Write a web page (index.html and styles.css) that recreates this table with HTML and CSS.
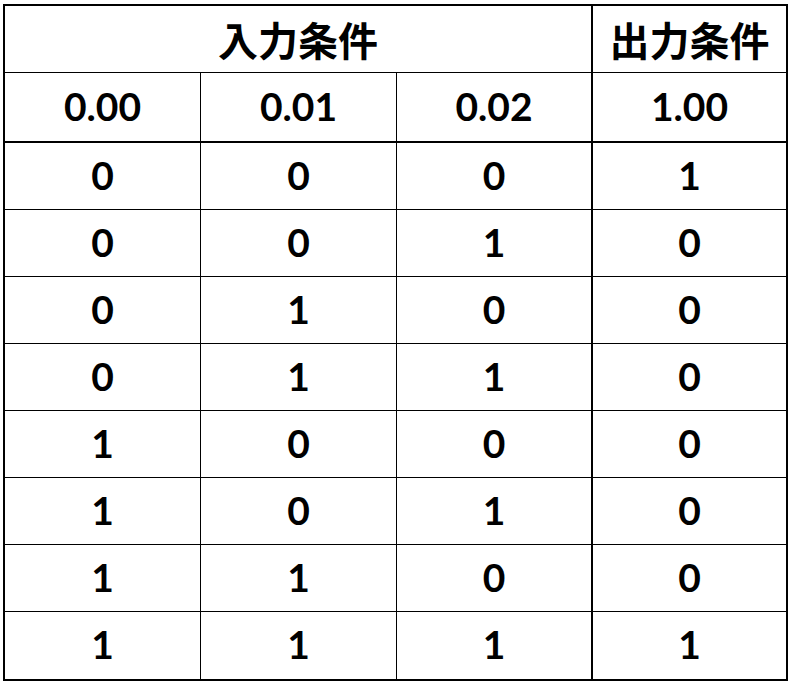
FILE: index.html
```html
<!DOCTYPE html>
<html lang="ja">
<head>
<meta charset="utf-8">
<title>真理値表</title>
<link rel="stylesheet" href="styles.css">
</head>
<body>
<div class="table">
  <div class="cell head span3 thick-r">入力条件</div>
  <div class="cell head last-c">出力条件</div>

  <div class="cell num thick-b">0.00</div>
  <div class="cell num thick-b">0.01</div>
  <div class="cell num thick-b thick-r">0.02</div>
  <div class="cell num thick-b last-c">1.00</div>

  <div class="cell num">0</div><div class="cell num">0</div><div class="cell num thick-r">0</div><div class="cell num last-c">1</div>
  <div class="cell num">0</div><div class="cell num">0</div><div class="cell num thick-r">1</div><div class="cell num last-c">0</div>
  <div class="cell num">0</div><div class="cell num">1</div><div class="cell num thick-r">0</div><div class="cell num last-c">0</div>
  <div class="cell num">0</div><div class="cell num">1</div><div class="cell num thick-r">1</div><div class="cell num last-c">0</div>
  <div class="cell num">1</div><div class="cell num">0</div><div class="cell num thick-r">0</div><div class="cell num last-c">0</div>
  <div class="cell num">1</div><div class="cell num">0</div><div class="cell num thick-r">1</div><div class="cell num last-c">0</div>
  <div class="cell num">1</div><div class="cell num">1</div><div class="cell num thick-r">0</div><div class="cell num last-c">0</div>
  <div class="cell num last-r">1</div><div class="cell num last-r">1</div><div class="cell num thick-r last-r">1</div><div class="cell num last-c last-r">1</div>
</div>
</body>
</html>
```
FILE: styles.css
```css
html, body {
  margin: 0;
  padding: 0;
  background: #ffffff;
}

body {
  padding: 4px 0 0 3px;
}

.table {
  display: grid;
  grid-template-columns: 196px 196px 196px 193px;
  grid-template-rows: 67px 70px repeat(7, 67px) 67px;
  width: 781px;
  border: 2px solid #000;
  color: #000;
}

.cell {
  box-sizing: border-box;
  display: flex;
  align-items: center;
  justify-content: center;
  border-right: 1px solid #000;
  border-bottom: 1px solid #000;
  line-height: 1;
}

.head {
  font-family: "Noto Sans CJK JP", sans-serif;
  font-weight: 700;
  font-size: 40px;
}

.num {
  font-family: Lato, "Liberation Sans", sans-serif;
  font-weight: 700;
  font-size: 39px;
  padding-bottom: 2px;
}

.span3 {
  grid-column: span 3;
}

.thick-r {
  border-right-width: 2px;
}

.thick-b {
  border-bottom-width: 2px;
}

.last-c {
  border-right: none;
}

.last-r {
  border-bottom: none;
}
```
